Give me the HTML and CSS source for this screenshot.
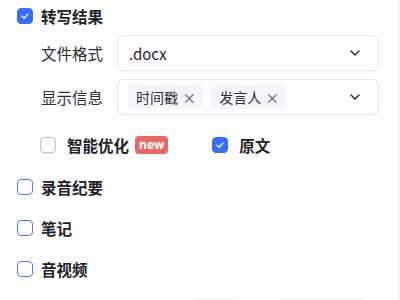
FILE: index.html
```html
<!DOCTYPE html>
<html lang="zh-CN">
<head>
    <meta charset="UTF-8">
    <title>导出</title>
    <link rel="stylesheet" href="styles.css">
</head>
<body>
<div class="panel">
    <div class="group">
        <label class="check-row">
            <span class="box checked"><svg viewBox="0 0 16 16"><path d="M4.5 8.2l2.4 2.4 4.6-4.8"/></svg></span>
            <span class="title">转写结果</span>
        </label>
        <div class="fields">
            <div class="field">
                <span class="field-label">文件格式</span>
                <div class="select">
                    <span class="value">.docx</span>
                    <svg class="arrow" viewBox="0 0 12 12"><path d="M2 4l4 4 4-4"/></svg>
                </div>
            </div>
            <div class="field">
                <span class="field-label">显示信息</span>
                <div class="select">
                    <div class="tags">
                        <span class="tag">时间戳 <span class="x">×</span></span>
                        <span class="tag">发言人 <span class="x">×</span></span>
                    </div>
                    <svg class="arrow" viewBox="0 0 12 12"><path d="M2 4l4 4 4-4"/></svg>
                </div>
            </div>
        </div>
        <div class="options">
            <label class="check-row opt">
                <span class="box disabled"></span>
                <span class="title">智能优化</span>
                <span class="badge">new</span>
            </label>
            <label class="check-row opt">
                <span class="box checked"><svg viewBox="0 0 16 16"><path d="M4.5 8.2l2.4 2.4 4.6-4.8"/></svg></span>
                <span class="title">原文</span>
            </label>
        </div>
    </div>
    <label class="check-row item"><span class="box"></span><span class="title">录音纪要</span></label>
    <label class="check-row item"><span class="box"></span><span class="title">笔记</span></label>
    <label class="check-row item"><span class="box"></span><span class="title">音视频</span></label>
</div>
<div class="footer">
    <span class="btn-edge first"></span>
    <span class="btn-edge second"></span>
</div>
</body>
</html>
```
FILE: styles.css
```css
body {
    margin: 0;
    width: 400px;
    height: 300px;
    overflow: hidden;
    background: #fff;
    font-family: "Noto Sans CJK SC", "Noto Sans", sans-serif;
    color: #1f2329;
    border-right: 1px solid #eceef1;
    box-sizing: border-box;
    position: relative;
}
.panel {
    padding: 4px 0 0 17px;
}
.check-row {
    display: flex;
    align-items: center;
    height: 24px;
}
.box {
    width: 14px;
    height: 14px;
    border: 1px solid #4e7bf5;
    border-radius: 4px;
    box-sizing: content-box;
    display: flex;
    align-items: center;
    justify-content: center;
    flex-shrink: 0;
}
.box.checked {
    background: #3c6df4;
    border-color: #3c6df4;
}
.box.disabled {
    border-color: #a9c1fb;
}
.box svg {
    width: 16px;
    height: 16px;
    fill: none;
    stroke: #fff;
    stroke-width: 1.4;
    stroke-linecap: round;
    stroke-linejoin: round;
}
.title {
    font-size: 15.5px;
    font-weight: bold;
    margin-left: 8px;
    line-height: 24px;
}
.fields {
    padding: 7px 20px 0 24px;
    display: flex;
    flex-direction: column;
    gap: 8px;
}
.field {
    display: flex;
    align-items: center;
}
.field-label {
    width: 76px;
    font-size: 15.5px;
    color: #2b2f36;
}
.select {
    flex: 1;
    height: 36px;
    border: 1px solid #e3e5ea;
    border-radius: 6px;
    box-sizing: border-box;
    display: flex;
    align-items: center;
    justify-content: space-between;
    padding: 0 17px 0 10px;
}
.value {
    font-size: 15px;
    color: #1f2329;
    padding-left: 1px;
}
.arrow {
    width: 12px;
    height: 12px;
    fill: none;
    stroke: #2b2f36;
    stroke-width: 1.5;
    stroke-linecap: round;
    stroke-linejoin: round;
}
.tags {
    display: flex;
    gap: 8px;
}
.tag {
    background: #f4f6fb;
    border-radius: 4px;
    height: 24px;
    line-height: 24px;
    padding: 0 7px 0 8px;
    font-size: 14px;
    color: #2b2f36;
}
.x {
    color: #51565d;
    margin-left: 1px;
}
.options {
    display: flex;
    padding: 18px 0 0 23px;
}
.opt .title {
    margin-left: 11px;
}
.opt + .opt {
    margin-left: 44px;
}
.badge {
    background: #e8696a;
    color: #fff;
    font-size: 12px;
    font-weight: bold;
    font-family: "Open Sans", sans-serif;
    line-height: 17px;
    padding: 0 4px 1px;
    border-radius: 4px;
    margin-left: 6px;
}
.item {
    margin-top: 17px;
}
.check-row.item:nth-child(2) {
    margin-top: 18px;
}
.footer {
    position: absolute;
    bottom: 0;
    left: 0;
    right: 0;
    height: 1px;
}
.btn-edge {
    position: absolute;
    top: 0;
    height: 1px;
    background: #eef0f3;
}
.first {
    left: 193px;
    width: 42px;
}
.second {
    left: 280px;
    width: 84px;
}
```
